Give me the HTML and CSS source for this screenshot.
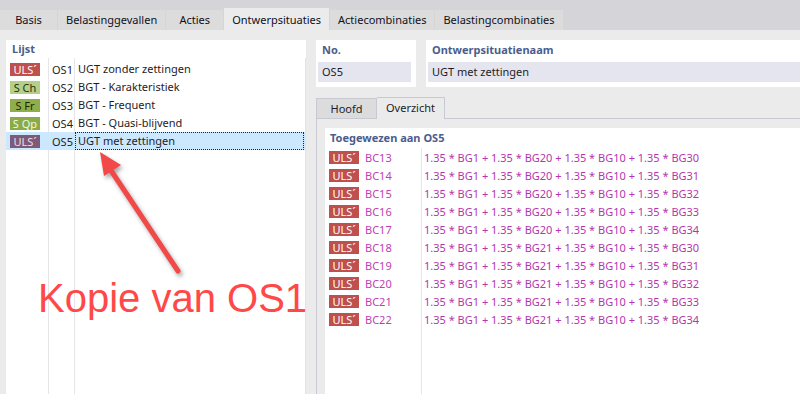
FILE: index.html
```html
<!DOCTYPE html>
<html lang="nl">
<head>
  <meta charset="UTF-8">
  <title>Ontwerpsituaties</title>
  <link rel="stylesheet" href="styles.css">
</head>
<body>

  <!-- Hoofdtabs -->
  <div class="topbar">
    <div class="tab">Basis</div>
    <div class="tab">Belastinggevallen</div>
    <div class="tab">Acties</div>
    <div class="tab active">Ontwerpsituaties</div>
    <div class="tab">Actiecombinaties</div>
    <div class="tab">Belastingcombinaties</div>
  </div>

  <div class="main">
    <!-- Lijst links -->
    <section class="list-panel">
      <div class="panel-title">Lijst</div>
      <div class="list">
        <div class="row">
          <span class="badge-cell"><span class="badge uls">ULS´</span></span>
          <span class="no">OS1</span>
          <span class="name">UGT zonder zettingen</span>
        </div>
        <div class="row">
          <span class="badge-cell"><span class="badge sch">S Ch</span></span>
          <span class="no">OS2</span>
          <span class="name">BGT - Karakteristiek</span>
        </div>
        <div class="row">
          <span class="badge-cell"><span class="badge sfr">S Fr</span></span>
          <span class="no">OS3</span>
          <span class="name">BGT - Frequent</span>
        </div>
        <div class="row">
          <span class="badge-cell"><span class="badge sqp">S Qp</span></span>
          <span class="no">OS4</span>
          <span class="name">BGT - Quasi-blijvend</span>
        </div>
        <div class="row selected">
          <span class="badge-cell"><span class="badge uls-sel">ULS´</span></span>
          <span class="no">OS5</span>
          <span class="name">UGT met zettingen</span>
        </div>
      </div>
    </section>

    <!-- Details rechts -->
    <section class="detail">
      <div class="fields">
        <div class="field no-field">
          <div class="label">No.</div>
          <div class="input">OS5</div>
        </div>
        <div class="field name-field">
          <div class="label">Ontwerpsituatienaam</div>
          <div class="input">UGT met zettingen</div>
        </div>
      </div>

      <div class="subtabs">
        <div class="subtab">Hoofd</div>
        <div class="subtab active">Overzicht</div>
      </div>

      <div class="subpanel">
        <div class="content">
          <div class="panel-title">Toegewezen aan OS5</div>
          <div class="combos" id="combos"></div>
        </div>
      </div>
    </section>
  </div>

  <!-- Annotatie -->
  <svg class="arrow" width="800" height="394" viewBox="0 0 800 394">
    <g class="arrow-shape">
      <line x1="178" y1="271" x2="108" y2="166" stroke="#f24848" stroke-width="5" stroke-linecap="round"/>
      <polygon points="100,152 121,165 104,176" fill="#f24848"/>
    </g>
  </svg>
  <div class="note">Kopie van OS1</div>

  <script>
    const combos = [
      ["BC13", 20, 30], ["BC14", 20, 31], ["BC15", 20, 32], ["BC16", 20, 33], ["BC17", 20, 34],
      ["BC18", 21, 30], ["BC19", 21, 31], ["BC20", 21, 32], ["BC21", 21, 33], ["BC22", 21, 34]
    ];
    const box = document.getElementById("combos");
    combos.forEach(function (c) {
      const row = document.createElement("div");
      row.className = "combo";
      row.innerHTML =
        '<span class="badge uls">ULS´</span>' +
        '<span class="bc">' + c[0] + '</span>' +
        '<span class="formula">1.35 * BG1 + 1.35 * BG' + c[1] +
        ' + 1.35 * BG10 + 1.35 * BG' + c[2] + '</span>';
      box.appendChild(row);
    });
  </script>
</body>
</html>
```

FILE: styles.css
```css
body {
  margin: 0;
  width: 800px;
  height: 394px;
  overflow: hidden;
  position: relative;
  background: #ebebeb;
  font-family: "Noto Sans", "Open Sans", sans-serif;
  font-size: 11px;
  color: #1c1c28;
}

/* Hoofdtabs */
.topbar {
  height: 30px;
  background: #d4d4d9;
  display: flex;
  align-items: flex-end;
  gap: 1px;
}

.tab {
  height: 20px;
  line-height: 20px;
  min-width: 57px;
  padding: 0 8px;
  box-sizing: border-box;
  text-align: center;
  background: #dcdcdc;
  color: #10101c;
}

.tab.active {
  height: 22px;
  line-height: 24px;
  background: #ebebeb;
}

.main {
  display: flex;
  height: 364px;
  padding: 10px 0 0 6px;
  box-sizing: border-box;
}

.panel-title {
  height: 18px;
  line-height: 18px;
  padding-left: 6px;
  color: #4b5d8c;
  font-weight: bold;
}

/* Lijst */
.list-panel {
  width: 300px;
  background: #fff;
  display: flex;
  flex-direction: column;
}

.list {
  flex: 1;
  padding-top: 2px;
  border-right: 1px solid #e3e3e6;
  background:
    linear-gradient(#e6e6e8, #e6e6e8) 42px 0 / 1px 100% no-repeat,
    linear-gradient(#e6e6e8, #e6e6e8) 68px 0 / 1px 100% no-repeat;
}

.row {
  display: flex;
  align-items: center;
  height: 18px;
}

.row.selected {
  background: #cce8ff;
}

.badge-cell {
  width: 42px;
  padding-left: 4px;
  box-sizing: border-box;
}

.no {
  width: 26px;
  padding-left: 4px;
  box-sizing: border-box;
}

.name {
  flex: 1;
  padding-left: 4px;
  align-self: stretch;
  line-height: 18px;
}

.row.selected .name {
  outline: 1px dotted #222;
  outline-offset: -1px;
  margin: 0 1px 0 1px;
  padding-left: 3px;
}

.badge {
  display: inline-block;
  width: 30px;
  height: 13px;
  line-height: 13px;
  text-align: center;
  font-size: 11px;
  color: #fff;
}

.uls { background: #c0504d; }
.sch { background: #b4cf88; color: #26330e; }
.sfr { background: #8fae4a; color: #1c260a; }
.sqp { background: #8aab48; color: #f2f7e6; }
.uls-sel { background: #7e5a7a; color: #eadfe8; }

/* Details */
.detail {
  flex: 1;
  margin-left: 10px;
  display: flex;
  flex-direction: column;
}

.fields {
  display: flex;
  gap: 10px;
  height: 47px;
}

.field {
  background: #fff;
  padding: 0 5px 0 2px;
}

.no-field {
  width: 100px;
  box-sizing: border-box;
}

.name-field {
  flex: 1;
  padding-right: 0;
}

.label {
  height: 22px;
  line-height: 20px;
  padding-left: 4px;
  color: #4b5d8c;
  font-weight: bold;
}

.input {
  height: 20px;
  line-height: 20px;
  padding-left: 4px;
  background: #e5e5ef;
}

.subtabs {
  display: flex;
  align-items: flex-end;
  height: 21px;
  margin-top: 10px;
}

.subtab {
  height: 20px;
  line-height: 19px;
  min-width: 61px;
  padding: 0 9px;
  box-sizing: border-box;
  text-align: center;
  background: #dcdcdc;
  border: 1px solid #c9c9d3;
  border-bottom: none;
}

.subtab + .subtab {
  border-left: none;
}

.subtab.active {
  position: relative;
  height: 22px;
  margin-bottom: -1px;
  background: #ebebeb;
}

.subpanel {
  flex: 1;
  display: flex;
  padding: 9px 0 0 8px;
  border-top: 1px solid #c9c9d3;
  border-left: 1px solid #c9c9d3;
}

.content {
  flex: 1;
  display: flex;
  flex-direction: column;
  background: #fff;
}

.content .panel-title {
  height: 20px;
  line-height: 20px;
  padding-left: 5px;
}

.combos {
  flex: 1;
  background: linear-gradient(#e6e6e8, #e6e6e8) 96px 0 / 1px 100% no-repeat;
}

.combo {
  display: flex;
  align-items: center;
  height: 18px;
  padding-left: 4px;
}

.bc {
  width: 62px;
  padding-left: 6px;
  box-sizing: border-box;
  color: #c040b4;
}

.formula {
  padding-left: 3px;
  color: #b436ae;
}

/* Annotatie */
.arrow {
  position: absolute;
  left: 0;
  top: 0;
  pointer-events: none;
}

.arrow-shape {
  filter: drop-shadow(2px 3px 2px rgba(0, 0, 0, 0.35));
}

.note {
  position: absolute;
  left: 38px;
  top: 278px;
  font-family: "Liberation Sans", Arial, sans-serif;
  font-size: 40px;
  line-height: 40px;
  color: #ff4848;
  white-space: nowrap;
}
```
